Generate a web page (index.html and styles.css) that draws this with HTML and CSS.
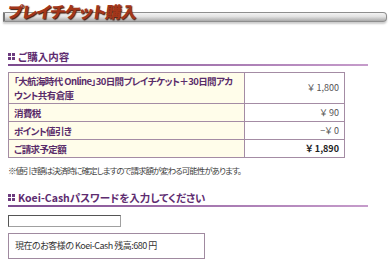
FILE: index.html
```html
<!DOCTYPE html>
<html lang="ja">
<head>
    <meta charset="UTF-8">
    <title>プレイチケット購入</title>
    <link rel="stylesheet" href="styles.css">
</head>
<body>
    <div class="title-bar">
        <div class="bar"></div>
        <h1>プレイチケット購入</h1>
    </div>

    <h2 class="sec-head"><span class="sec-icon"></span>ご購入内容</h2>

    <table class="order">
        <tr>
            <th>「大航海時代 Online」30日間プレイチケット＋30日間アカウント共有倉庫</th>
            <td>￥ 1,800</td>
        </tr>
        <tr>
            <th>消費税</th>
            <td>￥ 90</td>
        </tr>
        <tr>
            <th>ポイント値引き</th>
            <td>−￥ 0</td>
        </tr>
        <tr>
            <th>ご請求予定額</th>
            <td class="total">￥ 1,890</td>
        </tr>
    </table>

    <p class="note">※値引き額は決済時に確定しますので請求額が変わる可能性があります。</p>

    <h2 class="sec-head sec-cash"><span class="sec-icon"></span>Koei-Cashパスワードを入力してください</h2>

    <input type="password" class="pass-input">

    <div class="balance">現在のお客様の Koei-Cash 残高:680 円</div>
</body>
</html>
```

FILE: styles.css
```css
* {
    margin: 0;
    padding: 0;
    box-sizing: border-box;
}

body {
    font-family: "Noto Sans CJK JP", "Noto Sans", sans-serif;
    font-feature-settings: "palt";
    background: #fff;
    color: #333;
    width: 391px;
}

/* タイトル */
.title-bar {
    position: relative;
    height: 30px;
    margin: 0 4px 0 3px;
}

.title-bar .bar {
    position: absolute;
    top: 12px;
    left: 0;
    right: 0;
    height: 10px;
    background: linear-gradient(#f4f4f4 0%, #e2e2e2 45%, #a9a9a9 100%);
    border: 1px solid #8e8e8e;
    border-left: 2px solid #777;
    border-radius: 0 4px 4px 0;
    box-shadow: 0 2px 2px rgba(0, 0, 0, 0.2);
}

.title-bar h1 {
    position: absolute;
    top: 2px;
    left: 5px;
    font-size: 16px;
    font-weight: 900;
    letter-spacing: -0.5px;
    color: #a3361a;
    transform: skewX(-8deg);
    text-shadow: 1px 1px 1px #3a1a10;
    line-height: 19px;
}

/* 見出し */
.sec-head {
    display: flex;
    align-items: center;
    margin: 20px 23px 0 8px;
    padding-bottom: 3px;
    font-size: 10.5px;
    font-weight: bold;
    color: #5e2c70;
    line-height: 13px;
    background: linear-gradient(to right, #7c4a8e, #c69ccb) no-repeat left bottom / 100% 2px;
}

.sec-icon {
    width: 7px;
    height: 7px;
    margin-right: 3px;
    background:
        linear-gradient(#fff, #fff) 3px 0 / 1px 7px no-repeat,
        linear-gradient(#fff, #fff) 0 3px / 7px 1px no-repeat,
        #6c3b7e;
}

/* 明細 */
.order {
    margin: 6px 0 0 8px;
    width: 337px;
    border-collapse: collapse;
    font-size: 9.5px;
}

.order th,
.order td {
    border: 1px solid #a48ca4;
    height: 18px;
    padding: 1px 5px;
    line-height: 14px;
}

.order th {
    width: 236px;
    background: #fffdea;
    color: #5a2c6a;
    font-weight: bold;
    letter-spacing: -0.6px;
    text-align: left;
}

.order td {
    background: #fff;
    color: #555;
    font-size: 9px;
    text-align: right;
}

.order td.total {
    color: #222;
    font-weight: bold;
}

.note {
    margin: 6px 0 0 8px;
    font-size: 8.5px;
    letter-spacing: -1px;
    line-height: 13px;
    color: #444;
}

.sec-cash {
    margin-top: 14px;
}

.pass-input {
    display: block;
    margin: 8px 0 0 8px;
    width: 113px;
    height: 12px;
    border: 1px solid #a0a0a0;
    border-top-color: #555;
    border-left-color: #555;
    background: #fff;
}

.balance {
    margin: 6px 0 0 8px;
    width: 197px;
    height: 26px;
    padding: 0 6px;
    border: 1px solid #a08aa0;
    font-size: 9px;
    letter-spacing: -0.5px;
    color: #333;
    line-height: 24px;
}
```
